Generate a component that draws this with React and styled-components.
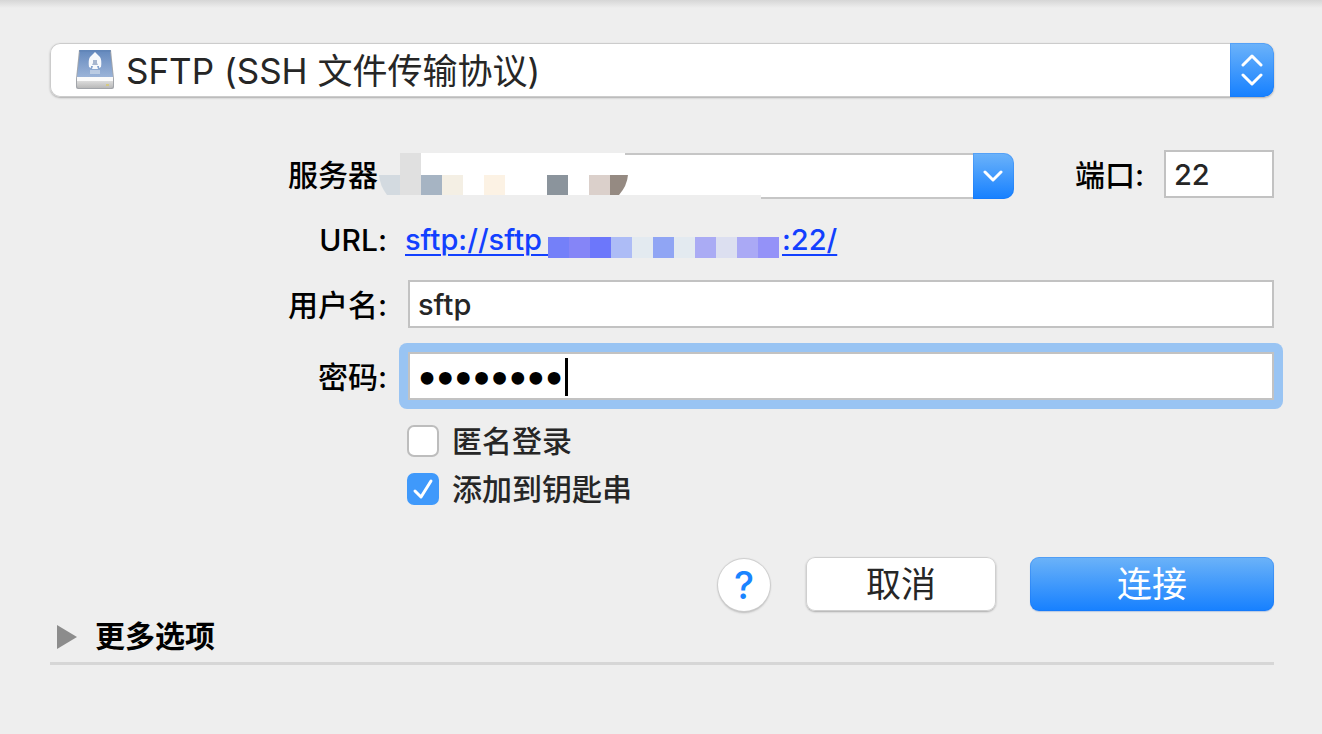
import React, { useState } from 'react'
import styled, { createGlobalStyle } from 'styled-components'

const GlobalStyle = createGlobalStyle`
  * {
    box-sizing: border-box;
  }
  body {
    margin: 0;
    background-color: #eeeeee;
  }
  body, input, select, button {
    font-family: Inter, "Noto Sans CJK SC", sans-serif;
    font-feature-settings: "calt" 0;
    font-weight: 500;
  }
`

const Dialog = styled.form`
  display: flex;
  flex-direction: column;
  min-height: 100vh;
  padding: 43px 48px 40px 50px;
  background: linear-gradient(#d6d6d6, #eeeeee 8px);
  color: #000000;
  font-size: 30px;
  line-height: 40px;
`

const Protocol = styled.div`
  display: flex;
  align-items: center;
  height: 54px;
  padding-left: 25px;
  border-radius: 10px;
  background-color: #ffffff;
  box-shadow: 0 0 0 1px #cccccc inset, 0 1px 2px #aaaaaa;
  overflow: hidden;
`

const ProtocolSelect = styled.select`
  flex: 1;
  height: 54px;
  margin-left: 11px;
  padding: 2px 0 0;
  border: 0;
  appearance: none;
  background-color: transparent;
  color: #262626;
  font-size: 35px;
  font-weight: 400;
`

const BlueCap = styled.span`
  display: flex;
  align-items: center;
  justify-content: center;
  flex: none;
  align-self: stretch;
  width: ${(props) => props.$width}px;
  padding: 0;
  border: 0;
  border-radius: 0 10px 10px 0;
  background: linear-gradient(#6cb3fa, #1680ff);
  box-shadow: 0 0 0 1px rgba(20, 110, 240, 0.25) inset;
`

const Fields = styled.div`
  display: grid;
  grid-template-columns: 337px minmax(0, 1fr);
  column-gap: 21px;
  margin-top: 52px;
`

const Label = styled.label`
  align-self: center;
  justify-self: end;
  padding-top: 2px;
  white-space: nowrap;
`

const ServerLabel = styled(Label)`
  padding-right: 9px;
`

const UrlLabel = styled(Label)`
  padding-top: 0;
`

const ServerRow = styled.div`
  display: flex;
  align-items: center;
  height: 50px;
`

const Combo = styled.div`
  position: relative;
  display: flex;
  flex: 1;
  height: 46px;
  margin-top: 4px;
`

const ComboInput = styled.input`
  flex: 1;
  min-width: 0;
  padding: 0 10px;
  border: 2px solid #c6c6c6;
  border-width: 2px 0 2px 2px;
  background-color: #ffffff;
  font-size: 30px;
`

const ServerMosaic = styled.svg`
  position: absolute;
  left: -29px;
  top: -2px;
`

const PortLabel = styled.label`
  margin-left: 61px;
  padding-top: 2px;
`

const TextInput = styled.input`
  width: ${(props) => props.$width || '100%'};
  height: 48px;
  padding: 0 8px;
  border: 2px solid #c2c2c2;
  border-radius: 0;
  outline: 0;
  background-color: #ffffff;
  color: #262626;
  font-size: 29px;
`

const PortInput = styled(TextInput)`
  margin-left: 20px;
`

const UrlRow = styled.div`
  display: flex;
  align-items: center;
  height: 81px;
  margin-left: -3px;
`

const UrlLink = styled.a`
  display: flex;
  align-items: center;
  color: #1240ff;
  font-size: 29px;
  text-decoration-thickness: 2px;
  text-underline-offset: 4px;
`

const UserRow = styled.div`
  height: 48px;
`

const FocusRing = styled.div`
  margin: 15px -9px -9px;
  padding: 9px;
  border-radius: 8px;
  background-color: #99c4f3;
`

const PasswordField = styled.div`
  position: relative;
`

const PasswordLabel = styled(Label)`
  margin-top: 24px;
`

const PasswordInput = styled(TextInput)`
  display: block;
  padding-bottom: 2px;
  color: #000000;
  font-size: 34px;
  -webkit-text-stroke: 2px #000000;
`

const Caret = styled.span`
  position: absolute;
  left: 157px;
  top: 6px;
  width: 3px;
  height: 38px;
  background-color: #000000;
`

const Options = styled.div`
  grid-column: 2;
  display: flex;
  flex-direction: column;
  gap: 8px;
  margin: 21px 0 0 -1px;
`

const Option = styled.label`
  display: flex;
  align-items: center;
  gap: 13px;
  color: #262626;
`

const CheckInput = styled.input`
  appearance: none;
  width: 32px;
  height: 32px;
  margin: 0;
  border: 2px solid #bdbdbd;
  border-radius: 7px;
  background-color: #ffffff;
  &:checked {
    border-color: #3f99fb;
    background-color: #3f99fb;
  }
`

const CheckBox = styled.span`
  position: relative;
  display: flex;
`

const CheckMark = styled.svg`
  position: absolute;
  left: 0;
  top: 0;
  pointer-events: none;
`

const Actions = styled.div`
  display: flex;
  align-items: center;
  justify-content: flex-end;
  height: 54px;
  margin-top: 48px;
`

const HelpButton = styled.button`
  width: 52px;
  height: 52px;
  margin: 2px 36px 0 0;
  padding: 0;
  border: 0;
  border-radius: 50%;
  background-color: #ffffff;
  box-shadow: 0 0 1px 1px #cccccc, 0 2px 2px #bbbbbb;
  color: #1a84ff;
  font-size: 38px;
  line-height: 52px;
`

const PushButton = styled.button`
  width: ${(props) => props.$width}px;
  height: 54px;
  padding: 0;
  border: 0;
  border-radius: 9px;
  background: ${(props) => (props.$primary ? 'linear-gradient(#6cb3f8, #1680ff)' : '#ffffff')};
  box-shadow: ${(props) =>
    props.$primary
      ? '0 0 0 1px rgba(20, 110, 240, 0.3) inset, 0 1px 1px #b8c8e0'
      : '0 0 0 1px #cfcfcf inset, 0 1px 2px #aaaaaa'};
  color: ${(props) => (props.$primary ? '#ffffff' : '#262626')};
  font-size: 35px;
  font-weight: 400;
  line-height: 52px;
  & + & {
    margin-left: 34px;
  }
`

const MoreButton = styled.button`
  display: flex;
  align-items: center;
  gap: 18px;
  height: 54px;
  padding: 0 7px;
  border: 0;
  border-bottom: 3px solid #d6d6d6;
  background-color: transparent;
  color: #000000;
  font-size: 30px;
  font-weight: 700;
  line-height: 40px;
`

const MoreText = styled.span`
  padding-bottom: 2px;
`

const SERVER_BLOCKS = [
  [42, '#a6b4c3'],
  [63, '#f4efe4'],
  [105, '#fcf2e4'],
  [168, '#8b949c'],
  [210, '#dbd0cb'],
]

const URL_BLOCKS = [
  '#7480f9', '#8585f7', '#6c77fb', '#adbcf6', '#e3eaf0', '#90a5f4',
  '#e3eaf0', '#aaabf4', '#dcdff0', '#aaa9f5', '#9492f8',
]

function DriveIcon() {
  return (
    <svg width="40" height="42" viewBox="0 0 40 42" aria-hidden="true">
      <defs>
        <linearGradient id="lid" x1="0" y1="0" x2="0" y2="1">
          <stop offset="0" stopColor="#6388bd" />
          <stop offset="1" stopColor="#9db5d9" />
        </linearGradient>
        <linearGradient id="front" x1="0" y1="0" x2="0" y2="1">
          <stop offset="0" stopColor="#dcdcdc" />
          <stop offset="1" stopColor="#b9b9b9" />
        </linearGradient>
      </defs>
      <path d="M4 1H36L39 30V38Q39 40 37 40H3Q1 40 1 38V30Z" fill="#a2a5aa" />
      <path d="M5 1H35L38 29H2Z" fill="url(#lid)" />
      <path d="M4 2H36" stroke="#5f82b3" strokeWidth="1" />
      <path d="M2 28H38V32H2Z" fill="#fafafa" />
      <path d="M2 32H38V37Q38 39 36 39H4Q2 39 2 37Z" fill="url(#front)" />
      <path d="M20 3L25 8Q27 11 26 18L24 19V17H22L23 20H17L18 17H16V19L14 18Q13 11 15 8Z" fill="#f7f9fc" />
      <path d="M18 11H22V14L23 16H17L18 14Z" fill="#a7b6cf" />
      <path d="M15 21H25V25H15Z" fill="#d5dfed" opacity="0.6" />
      <path d="M31 36H34" stroke="#d5c982" strokeWidth="2" />
    </svg>
  )
}

function App() {
  const [anonymous, setAnonymous] = useState(false)
  const [keychain, setKeychain] = useState(true)

  return (
    <Dialog onSubmit={(e) => e.preventDefault()}>
      <GlobalStyle />
      <Protocol>
        <DriveIcon />
        <ProtocolSelect aria-label="协议">
          <option>SFTP (SSH 文件传输协议)</option>
        </ProtocolSelect>
        <BlueCap $width={44}>
          <svg width="22" height="34" viewBox="0 0 22 34" fill="none" stroke="#fff" strokeWidth="3" strokeLinecap="round" strokeLinejoin="round" aria-hidden="true">
            <path d="M2 12L11 3L20 12M2 22L11 31L20 22" />
          </svg>
        </BlueCap>
      </Protocol>

      <Fields>
        <ServerLabel htmlFor="server">服务器</ServerLabel>
        <ServerRow>
          <Combo>
            <ComboInput id="server" />
            <BlueCap as="button" type="button" $width={41} aria-label="服务器列表">
              <svg width="20" height="14" viewBox="0 0 20 14" fill="none" stroke="#fff" strokeWidth="3" strokeLinecap="round" strokeLinejoin="round" aria-hidden="true">
                <path d="M2 3L10 11L18 3" />
              </svg>
            </BlueCap>
            <ServerMosaic width="382" height="49" viewBox="0 0 382 49" aria-hidden="true">
              <path d="M42 2H246V4H382V45H42Z" fill="#ffffff" />
              <path d="M0 24H21V44H8Q1 35 0 24Z" fill="#d3dae0" />
              <path d="M21 2H42V44H21Z" fill="#e0e0e0" />
              <path d="M8 44H382V49H8Z" fill="#eeeeee" />
              {SERVER_BLOCKS.map(([x, fill]) => (
                <rect key={x} x={x} y="24" width="21" height="20" fill={fill} />
              ))}
              <path d="M231 24H249Q248 35 240 44H231Z" fill="#958a82" />
            </ServerMosaic>
          </Combo>
          <PortLabel htmlFor="port">端口:</PortLabel>
          <PortInput id="port" $width="110px" defaultValue="22" />
        </ServerRow>

        <UrlLabel as="span">URL:</UrlLabel>
        <UrlRow>
          <UrlLink href="#url">
            sftp://sftp
            <svg width="240" height="36" viewBox="0 0 240 36" aria-hidden="true">
              <path d="M0 32H8V34H0Z" fill="#1240ff" />
              {URL_BLOCKS.map((fill, i) => (
                <rect key={i} x={i * 21 + 6} y="15" width="21" height="21" fill={fill} />
              ))}
            </svg>
            :22/
          </UrlLink>
        </UrlRow>

        <Label htmlFor="user">用户名:</Label>
        <UserRow>
          <TextInput id="user" defaultValue="sftp" />
        </UserRow>

        <PasswordLabel htmlFor="password">密码:</PasswordLabel>
        <FocusRing>
          <PasswordField>
            <PasswordInput id="password" type="password" defaultValue="password" />
            <Caret />
          </PasswordField>
        </FocusRing>

        <Options>
          <Option>
            <CheckBox>
              <CheckInput type="checkbox" checked={anonymous} onChange={(e) => setAnonymous(e.target.checked)} />
            </CheckBox>
            匿名登录
          </Option>
          <Option>
            <CheckBox>
              <CheckInput type="checkbox" checked={keychain} onChange={(e) => setKeychain(e.target.checked)} />
              {keychain && (
                <CheckMark width="32" height="32" viewBox="0 0 32 32" fill="none" stroke="#fff" strokeWidth="3" strokeLinecap="round" strokeLinejoin="round">
                  <path d="M8 18L14 24L24 8" />
                </CheckMark>
              )}
            </CheckBox>
            添加到钥匙串
          </Option>
        </Options>
      </Fields>

      <Actions>
        <HelpButton type="button" aria-label="帮助">?</HelpButton>
        <PushButton type="button" $width={190}>取消</PushButton>
        <PushButton type="submit" $primary $width={244}>连接</PushButton>
      </Actions>

      <MoreButton type="button">
        <svg width="20" height="24" viewBox="0 0 20 24" aria-hidden="true">
          <path d="M0 0L20 12L0 24Z" fill="#8c8c8c" />
        </svg>
        <MoreText>更多选项</MoreText>
      </MoreButton>
    </Dialog>
  )
}

export default App
